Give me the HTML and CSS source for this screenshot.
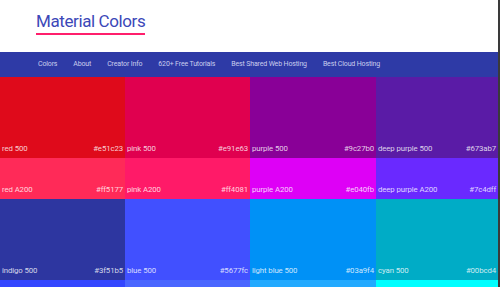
FILE: index.html
```html
<!DOCTYPE html>
<html>
<head>
    <title>Material Colors</title>
    <link rel="stylesheet" href="styles.css">
</head>
<body>
<div class="page">
    <header class="top">
        <h1 class="logo">Material Colors</h1>
    </header>

    <nav class="menu">
        <a href="#">Colors</a>
        <a href="#">About</a>
        <a href="#">Creator Info</a>
        <a href="#">620+ Free Tutorials</a>
        <a href="#">Best Shared Web Hosting</a>
        <a href="#">Best Cloud Hosting</a>
    </nav>

    <div class="grid">
        <div class="tile tall c-red"><span>red 500</span><span>#e51c23</span></div>
        <div class="tile tall c-pink"><span>pink 500</span><span>#e91e63</span></div>
        <div class="tile tall c-purple"><span>purple 500</span><span>#9c27b0</span></div>
        <div class="tile tall c-dpurple"><span>deep purple 500</span><span>#673ab7</span></div>

        <div class="tile c-red-a"><span>red A200</span><span>#ff5177</span></div>
        <div class="tile c-pink-a"><span>pink A200</span><span>#ff4081</span></div>
        <div class="tile c-purple-a"><span>purple A200</span><span>#e040fb</span></div>
        <div class="tile c-dpurple-a"><span>deep purple A200</span><span>#7c4dff</span></div>

        <div class="tile tall c-indigo"><span>indigo 500</span><span>#3f51b5</span></div>
        <div class="tile tall c-blue"><span>blue 500</span><span>#5677fc</span></div>
        <div class="tile tall c-lblue"><span>light blue 500</span><span>#03a9f4</span></div>
        <div class="tile tall c-cyan"><span>cyan 500</span><span>#00bcd4</span></div>

        <div class="tile c-indigo-a"><span>indigo A200</span><span>#536dfe</span></div>
        <div class="tile c-blue-a"><span>blue A200</span><span>#6889ff</span></div>
        <div class="tile c-lblue-a"><span>light blue A200</span><span>#40c4ff</span></div>
        <div class="tile c-cyan-a"><span>cyan A200</span><span>#18ffff</span></div>
    </div>
</div>
</body>
</html>
```

FILE: styles.css
```css
body {
    margin: 0;
    font-family: Roboto, "Noto Sans", sans-serif;
    overflow: hidden;
}
.page {
    border-right: 2px solid #3a3a3a;
}
.top {
    height: 52px;
    background: #fff;
    padding: 11px 0 0 36px;
    box-sizing: border-box;
}
.logo {
    display: inline-block;
    margin: 0;
    font-size: 17px;
    font-weight: 400;
    letter-spacing: -0.4px;
    color: #3c48b8;
    line-height: 20px;
    padding-bottom: 2px;
    border-bottom: 2px solid #ff1f6c;
}
.menu {
    height: 24px;
    background: #2e3aa6;
    display: flex;
    align-items: center;
    gap: 16px;
    padding-left: 38px;
    padding-bottom: 1px;
}
.menu a {
    color: #c9cdee;
    text-decoration: none;
    font-size: 7px;
    letter-spacing: -0.15px;
}
.grid {
    display: grid;
    grid-template-columns: 125px 125px 126px 1fr;
}
.tile {
    height: 41px;
    display: flex;
    justify-content: space-between;
    align-items: flex-end;
    padding: 0 2px 5px 2px;
    box-sizing: border-box;
    font-size: 7.8px;
    letter-spacing: -0.1px;
    line-height: 1;
    color: rgba(255, 255, 255, 0.8);
}
.tile.tall {
    height: 81px;
}
.c-red { background: #df0a1b; }
.c-pink { background: #e0004f; }
.c-purple { background: #890097; }
.c-dpurple { background: #5a1ba6; }
.c-red-a { background: #ff2a58; }
.c-pink-a { background: #ff1a68; }
.c-purple-a { background: #de00f6; }
.c-dpurple-a { background: #6a29ff; }
.c-indigo { background: #2d36a0; }
.c-blue { background: #4150ff; }
.c-lblue { background: #0091f6; }
.c-cyan { background: #00acc6; }
.c-indigo-a { background: #3346ff; }
.c-blue-a { background: #4a66ff; }
.c-lblue-a { background: #22aaff; }
.c-cyan-a { background: #00ffff; }
```
